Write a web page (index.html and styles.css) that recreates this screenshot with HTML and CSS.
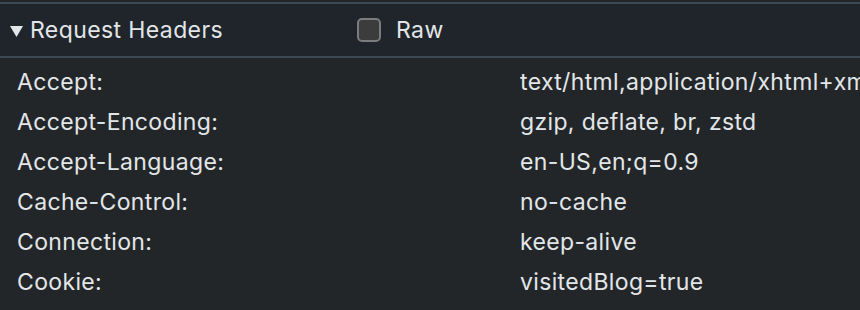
FILE: index.html
```html
<!DOCTYPE html>
<html lang="en">
<head>
  <meta charset="UTF-8" />
  <title>Request Headers</title>
  <link rel="stylesheet" href="styles.css">
</head>
<body>
  <div class="panel">
    <div class="section-header">
      <div class="title">
        <svg class="arrow" width="13" height="11" viewBox="0 0 13 11"><path d="M0 0H13L6.5 11Z" fill="#e3e6e9"/></svg>
        Request Headers
      </div>
      <label class="raw"><span class="box"></span>Raw</label>
    </div>

    <!-- lista de cabeceras -->
    <div class="headers">
      <div class="name">Accept:</div>
      <div class="value">text/html,application/xhtml+xml,application/xml;q=0.9,*/*;q=0.8</div>
      <div class="name">Accept-Encoding:</div>
      <div class="value">gzip, deflate, br, zstd</div>
      <div class="name">Accept-Language:</div>
      <div class="value">en-US,en;q=0.9</div>
      <div class="name">Cache-Control:</div>
      <div class="value">no-cache</div>
      <div class="name">Connection:</div>
      <div class="value">keep-alive</div>
      <div class="name">Cookie:</div>
      <div class="value">visitedBlog=true</div>
    </div>
  </div>
</body>
</html>
```

FILE: styles.css
```css
* {
  box-sizing: border-box;
  margin: 0;
  padding: 0;
}
body {
  background: #222629;
  color: #e3e6e9;
  font-family: 'Inter', 'Noto Sans', sans-serif;
  overflow: hidden;
}
.panel {
  width: 860px;
  height: 310px;
  padding-top: 2px;
  background: #222629;
}
.section-header {
  display: flex;
  align-items: center;
  height: 56px;
  background: #1f252b;
  border-top: 2px solid #3b4a55;
  border-bottom: 2px solid #3b4a55;
  padding-left: 10px;
  font-size: 23px;
  letter-spacing: 0.4px;
}
.title {
  display: flex;
  align-items: center;
  width: 347px;
}
.arrow {
  margin-right: 7px;
  margin-top: 2px;
}
.raw {
  display: flex;
  align-items: center;
}
.box {
  width: 24px;
  height: 24px;
  border: 2px solid #7b7c7d;
  border-radius: 5px;
  background: #3c3c3c;
  margin-right: 15px;
}
.headers {
  display: grid;
  grid-template-columns: 503px 1fr;
  padding: 4px 0 0 17px;
  font-size: 23px;
  letter-spacing: 0.35px;
  line-height: 40px;
  white-space: nowrap;
}
.value {
  overflow: hidden;
}
```
